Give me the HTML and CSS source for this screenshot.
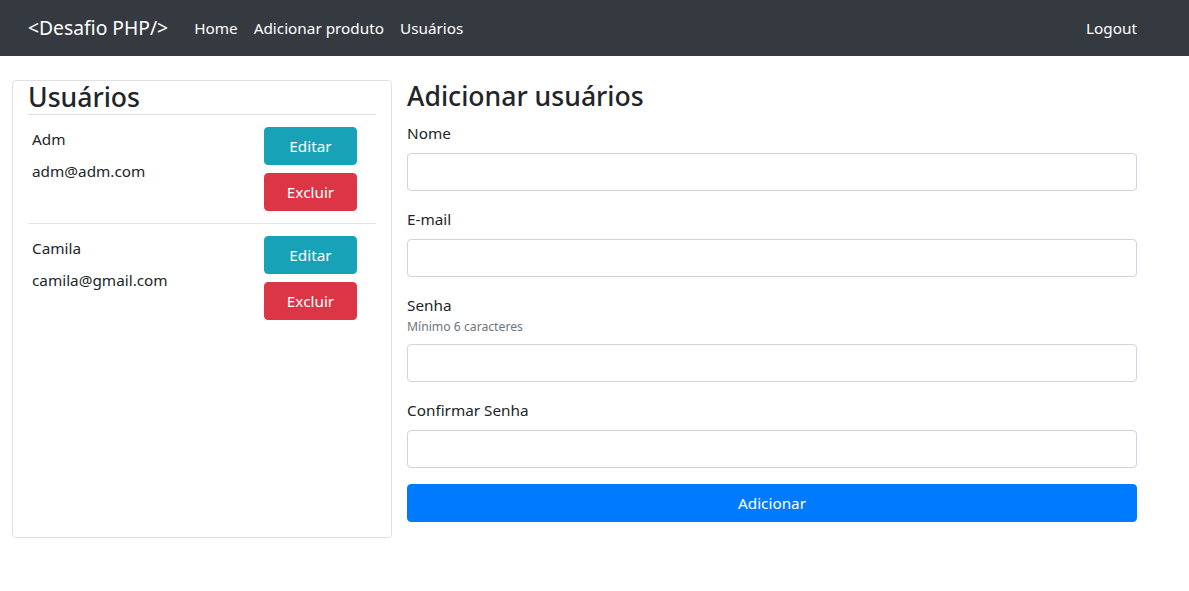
FILE: index.html
```html
<!DOCTYPE html>
<html lang="pt-BR">
<head>
<meta charset="utf-8">
<title>Desafio PHP - Usuários</title>
<link rel="stylesheet" href="styles.css">
</head>
<body>
<nav class="navbar">
  <a class="brand" href="#">&lt;Desafio PHP/&gt;</a>
  <ul class="nav">
    <li><a href="#">Home</a></li>
    <li><a href="#">Adicionar produto</a></li>
    <li><a href="#">Usuários</a></li>
  </ul>
  <a class="logout" href="#">Logout</a>
</nav>
<main class="main">
  <section class="card">
    <h3 class="card-title">Usuários</h3>
    <div class="user">
      <div class="user-info">
        <p class="user-name">Adm</p>
        <p class="user-email">adm@adm.com</p>
      </div>
      <div class="user-actions">
        <button class="btn btn-info">Editar</button>
        <button class="btn btn-danger">Excluir</button>
      </div>
    </div>
    <div class="user">
      <div class="user-info">
        <p class="user-name">Camila</p>
        <p class="user-email">camila@gmail.com</p>
      </div>
      <div class="user-actions">
        <button class="btn btn-info">Editar</button>
        <button class="btn btn-danger">Excluir</button>
      </div>
    </div>
  </section>
  <section class="form-col">
    <h3 class="title">Adicionar usuários</h3>
    <form class="form">
      <div class="form-group">
        <label class="label" for="nome">Nome</label>
        <input class="input" id="nome" type="text">
      </div>
      <div class="form-group">
        <label class="label" for="email">E-mail</label>
        <input class="input" id="email" type="email">
      </div>
      <div class="form-group">
        <label class="label label-tight" for="senha">Senha</label>
        <small class="hint">Mínimo 6 caracteres</small>
        <input class="input" id="senha" type="password">
      </div>
      <div class="form-group">
        <label class="label" for="confirmar">Confirmar Senha</label>
        <input class="input" id="confirmar" type="password">
      </div>
      <button type="button" class="btn btn-primary btn-block">Adicionar</button>
    </form>
  </section>
</main>
</body>
</html>
```
FILE: styles.css
```css
* { box-sizing: border-box; }
html, body { margin: 0; }
body {
  font-family: "Noto Sans", "Open Sans", sans-serif;
  font-size: 15.3px;
  line-height: 24px;
  color: #212529;
  background: #fff;
}
a { text-decoration: none; }

.navbar {
  display: flex;
  align-items: center;
  height: 56px;
  background: #343a40;
  padding: 0 52px 0 28px;
}
.brand {
  color: #fff;
  font-size: 19.3px;
  line-height: 30px;
  margin-right: 18px;
}
.nav {
  display: flex;
  list-style: none;
  margin: 0;
  padding: 0;
  flex: 1;
}
.nav a, .logout {
  color: #fff;
  display: block;
  padding: 8px;
}
.logout { padding-right: 0; }

.main {
  display: flex;
  align-items: flex-start;
  gap: 15px;
  padding: 24px 52px 0 12px;
}

.card {
  width: 380px;
  height: 458px;
  flex: none;
  border: 1px solid #dfdfdf;
  border-radius: 4px;
  padding: 0 15px;
}
.card-title {
  margin: 0;
  font-size: 26.6px;
  font-weight: 500;
  line-height: 33px;
  border-bottom: 1px solid #e3e3e3;
}
.user {
  display: flex;
  justify-content: space-between;
  padding: 12px 0 12px 4px;
}
.user + .user { border-top: 1px solid #e3e3e3; }
.user-name { margin: 0 0 8px; }
.user-email { margin: 0; }
.user-actions {
  display: flex;
  flex-direction: column;
  gap: 8px;
  width: 93px;
  margin-right: 19px;
}

.btn {
  font: inherit;
  display: block;
  border: 1px solid transparent;
  border-radius: 4px;
  padding: 6px 12px;
  color: #fff;
  line-height: 24px;
  cursor: pointer;
  text-align: center;
}
.btn-info { background: #17a2b8; border-color: #17a2b8; }
.btn-danger { background: #dc3545; border-color: #dc3545; }
.btn-primary { background: #007bff; border-color: #007bff; }
.btn-block { width: 100%; }

.form-col { flex: 1; }
.title {
  margin: 0 0 8px;
  font-size: 26.6px;
  font-weight: 500;
  line-height: 33px;
}
.form-group { margin-bottom: 16px; }
.label { display: block; margin-bottom: 8px; }
.label-tight { margin-bottom: 0; }
.hint {
  display: block;
  font-size: 12.2px;
  line-height: 19px;
  color: #6c757d;
  margin-bottom: 8px;
}
.input {
  display: block;
  width: 100%;
  height: 38px;
  padding: 6px 12px;
  font: inherit;
  border: 1px solid #ced4da;
  border-radius: 4px;
  background: #fff;
}
```
